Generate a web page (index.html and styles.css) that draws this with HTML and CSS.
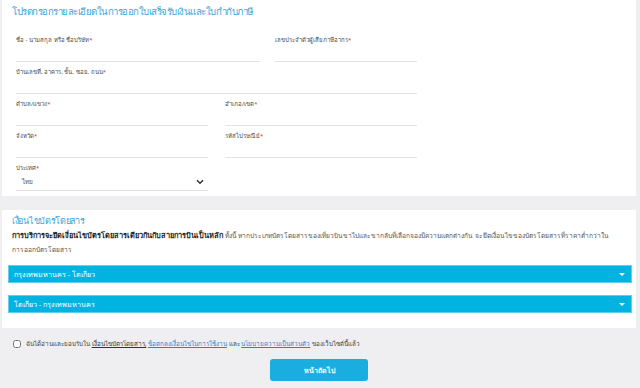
FILE: index.html
```html
<!DOCTYPE html>
<html lang="th">

<head>
    <meta charset="UTF-8">
    <meta name="viewport" content="width=device-width, initial-scale=1.0">
    <title>ใบเสร็จรับเงินและใบกำกับภาษี</title>
    <link rel="stylesheet" href="styles.css">
</head>

<body>
    <div class="page">

        <div class="card invoice">
            <h2 class="card-title">โปรดกรอกรายละเอียดในการออกใบเสร็จรับเงินและใบกำกับภาษี</h2>

            <div class="form">
                <div class="row">
                    <div class="field w-name">
                        <label>ชื่อ - นามสกุล หรือ ชื่อบริษัท<span class="req">*</span></label>
                        <input type="text">
                    </div>
                    <div class="field w-tax">
                        <label>เลขประจำตัวผู้เสียภาษีอากร<span class="req">*</span></label>
                        <input type="text">
                    </div>
                </div>
                <div class="row">
                    <div class="field w-full">
                        <label>บ้านเลขที่, อาคาร, ชั้น, ซอย, ถนน<span class="req">*</span></label>
                        <input type="text">
                    </div>
                </div>
                <div class="row">
                    <div class="field w-half">
                        <label>ตำบล/แขวง<span class="req">*</span></label>
                        <input type="text">
                    </div>
                    <div class="field w-half">
                        <label>อำเภอ/เขต<span class="req">*</span></label>
                        <input type="text">
                    </div>
                </div>
                <div class="row">
                    <div class="field w-half">
                        <label>จังหวัด<span class="req">*</span></label>
                        <input type="text">
                    </div>
                    <div class="field w-half">
                        <label>รหัสไปรษณีย์<span class="req">*</span></label>
                        <input type="text">
                    </div>
                </div>
                <div class="row">
                    <div class="field w-half">
                        <label>ประเทศ<span class="req">*</span></label>
                        <div class="select">
                            <span>ไทย</span>
                            <svg width="8" height="6" viewBox="0 0 8 6">
                                <path d="M1 1.2 L4 4.2 L7 1.2" fill="none" stroke="#333" stroke-width="1.5" />
                            </svg>
                        </div>
                    </div>
                </div>
            </div>
        </div>

        <div class="card terms">
            <h3 class="terms-title">เงื่อนไขบัตรโดยสาร</h3>
            <p class="terms-text"><b>การบริการจะยึดเงื่อนไขบัตรโดยสารเดียวกันกับสายการบินเป็นหลัก</b> ทั้งนี้ หากประเภทบัตรโดยสารของเที่ยวบินขาไปและขากลับที่เลือกจองมีความแตกต่างกัน จะยึดเงื่อนไขของบัตรโดยสารที่ราคาต่ำกว่าใน<br>การออกบัตรโดยสาร</p>

            <div class="route">
                <span>กรุงเทพมหานคร - โตเกียว</span>
                <i class="caret"></i>
            </div>
            <div class="route">
                <span>โตเกียว - กรุงเทพมหานคร</span>
                <i class="caret"></i>
            </div>
        </div>

        <div class="agree">
            <input type="checkbox" id="agree">
            <label for="agree">ฉันได้อ่านและยอมรับใน <a href="#" class="dark">เงื่อนไขบัตรโดยสาร,</a> <a href="#">ข้อตกลงเงื่อนไขในการใช้งาน</a> และ <a href="#">นโยบายความเป็นส่วนตัว</a> ของเว็บไซต์นี้แล้ว</label>
        </div>

        <div class="actions">
            <button type="button">หน้าถัดไป</button>
        </div>

    </div>
</body>

</html>
```

FILE: styles.css
```css
body {
    margin: 0;
    background: #efeff1;
    font-family: "Noto Sans", sans-serif;
    color: #444;
}

.page {
    padding: 0 4px 0 2px;
}

.card {
    background: #fff;
}

.invoice {
    padding: 4px 14px 5px 10px;
}

.card-title {
    margin: 0 0 15px;
    font-size: 9.6px;
    letter-spacing: -0.5px;
    line-height: 16px;
    font-weight: normal;
    color: #3aa6dc;
}

.form {
    padding-left: 4px;
    width: 401px;
}

.row {
    display: flex;
    justify-content: space-between;
}

.row:last-child .field {
    margin-bottom: 0;
}

.field {
    margin-bottom: 5px;
}

.field label {
    display: block;
    font-size: 6px;
    line-height: 10px;
    color: #4a4a4a;
}

.req {
    color: #e0313b;
}

.field input {
    display: block;
    width: 100%;
    box-sizing: border-box;
    height: 17px;
    border: 0;
    border-bottom: 1px solid #e3e3e6;
    outline: none;
}

.w-name {
    width: 244px;
}

.w-tax {
    width: 142px;
}

.w-full {
    width: 100%;
}

.w-half {
    width: 192px;
}

.select {
    display: flex;
    align-items: center;
    justify-content: space-between;
    height: 17px;
    padding: 0 4px 0 6px;
    border-bottom: 1px solid #e3e3e6;
    font-size: 6.5px;
    color: #555;
}

.terms {
    margin-top: 14px;
    padding: 3px 4px 15px 6px;
}

.terms-title {
    margin: 0 0 0 4px;
    font-size: 9px;
    letter-spacing: -0.3px;
    line-height: 15px;
    font-weight: normal;
    color: #3aa6dc;
}

.terms-text {
    margin: 0 4px 8px 4px;
    font-size: 6.6px;
    line-height: 14px;
    color: #555;
}

.terms-text b {
    color: #222;
    font-size: 7.4px;
}

.route {
    display: flex;
    align-items: center;
    justify-content: space-between;
    height: 18px;
    padding: 0 6px 0 5px;
    margin-bottom: 12px;
    background: #00b3e1;
    border: 1px solid #5fd0ee;
    box-sizing: border-box;
    color: #fff;
    font-size: 7.2px;
}

.route:last-child {
    margin-bottom: 0;
}

.caret {
    width: 0;
    height: 0;
    border-left: 3px solid transparent;
    border-right: 3px solid transparent;
    border-top: 3px solid #fff;
}

.agree {
    display: flex;
    align-items: center;
    padding: 11px 0 0 11px;
    font-size: 6.3px;
    color: #444;
}

.agree input {
    width: 8px;
    height: 8px;
    margin: 0 5px 0 0;
}

.agree a {
    color: #2f7fd6;
}

.agree a.dark {
    color: #333;
}

.actions {
    display: flex;
    justify-content: center;
    padding-top: 10px;
}

button {
    width: 98px;
    height: 22px;
    border: 0;
    border-radius: 3px;
    background: #1aaee0;
    color: #fff;
    font-family: inherit;
    font-size: 7px;
    font-weight: bold;
}
```
